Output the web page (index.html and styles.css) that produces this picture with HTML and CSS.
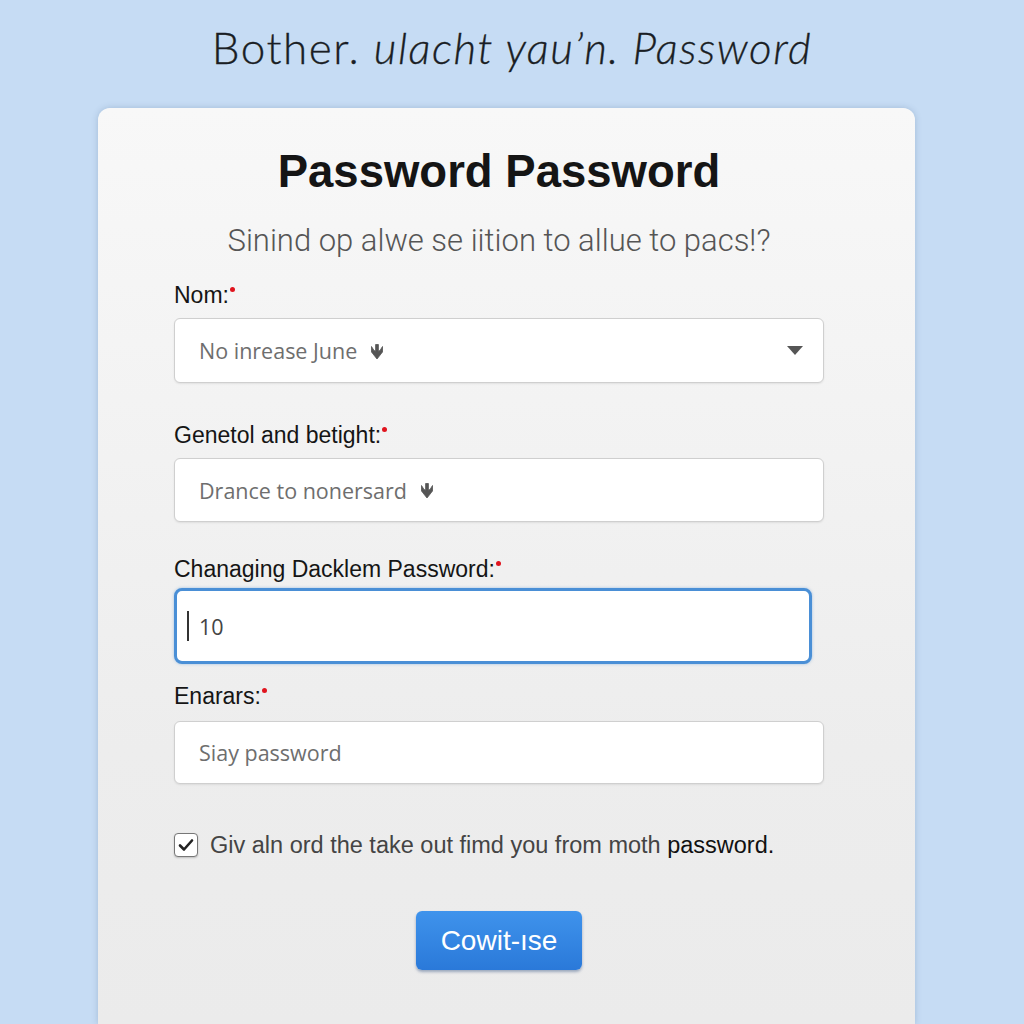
FILE: index.html
```html
<!DOCTYPE html>
<html lang="en">
<head>
    <meta charset="UTF-8">
    <title>Password</title>
    <link rel="stylesheet" href="styles.css">
</head>
<body>
<h1 class="page-title">Bother. <em>ulacht yau’n. Password</em></h1>

<div class="card">
    <h2 class="card-title">Password Password</h2>
    <p class="card-sub">Sinind op alwe se iition to allue to pacs!?</p>

    <form class="form">
        <label class="field-label">Nom:<span class="req"></span></label>
        <div class="input input-select">
            <span class="ph">No inrease June</span>
            <svg class="mark" width="16" height="18" viewBox="0 0 16 18"><path d="M8 17L2.5 10V4.5L5 8.5 6.6 9.2V2.5h2.8v6.7L11 8.5 13.5 4.5V10z" fill="#555" stroke="#555" stroke-width="0.8" stroke-linejoin="round"/></svg>
            <span class="caret"></span>
        </div>

        <label class="field-label l2">Genetol and betight:<span class="req"></span></label>
        <div class="input i2">
            <span class="ph">Drance to nonersard</span>
            <svg class="mark" width="16" height="18" viewBox="0 0 16 18"><path d="M8 17L2.5 10V4.5L5 8.5 6.6 9.2V2.5h2.8v6.7L11 8.5 13.5 4.5V10z" fill="#555" stroke="#555" stroke-width="0.8" stroke-linejoin="round"/></svg>
        </div>

        <label class="field-label l3">Chanaging Dacklem Password:<span class="req"></span></label>
        <div class="input input-focus">
            <span class="cursor"></span>
            <span class="val">10</span>
        </div>

        <label class="field-label l4">Enarars:<span class="req"></span></label>
        <div class="input i4">
            <span class="ph">Siay password</span>
        </div>

        <div class="check-row">
            <span class="checkbox">
                <svg width="16" height="14" viewBox="0 0 16 14"><path d="M2 7.5l4 4L14 2.5" stroke="#222" stroke-width="2.6" fill="none" stroke-linecap="round" stroke-linejoin="round"/></svg>
            </span>
            <span class="check-text">Giv aln ord the take out fimd you from moth <b>password.</b></span>
        </div>

        <div class="actions">
            <button type="button" class="btn">Cowit-ıse</button>
        </div>
    </form>
</div>
</body>
</html>
```

FILE: styles.css
```css
body {
    margin: 0;
    height: 1024px;
    overflow: hidden;
    background-color: #c6dcf4;
    font-family: "Liberation Sans", Arial, sans-serif;
    color: #222;
}

.page-title {
    margin: 0;
    padding-top: 23px;
    height: 108px;
    box-sizing: border-box;
    text-align: center;
    font-family: Lato, "Open Sans", sans-serif;
    font-weight: 300;
    font-size: 44px;
    line-height: 48px;
    letter-spacing: 1.5px;
    color: #1a1e24;
    -webkit-text-stroke: 0.3px #1a1e24;
}
.page-title em {
    font-style: italic;
}

.card {
    width: 817px;
    height: 916px;
    margin-left: 98px;
    box-sizing: border-box;
    padding: 38px 91px 0 76px;
    background: linear-gradient(#f8f8f8, #ededed 70%, #ebebeb);
    border-radius: 12px 12px 0 0;
    box-shadow: 0 0 6px rgba(60, 90, 130, 0.25);
}

.card-title {
    margin: 0;
    text-align: center;
    font-size: 45.5px;
    line-height: 52px;
    font-weight: bold;
    color: #151515;
}

.card-sub {
    margin: 24px 0 22px;
    text-align: center;
    font-family: Roboto, sans-serif;
    font-weight: 300;
    font-size: 31px;
    line-height: 38px;
    color: #555;
}

.field-label {
    display: block;
    font-size: 23px;
    line-height: 26px;
    color: #151515;
    margin-bottom: 10px;
}
.req {
    display: inline-block;
    width: 5px;
    height: 5px;
    border-radius: 50%;
    background: #e0141e;
    vertical-align: top;
    margin-top: 5px;
    margin-left: 1px;
}
.l2 { margin-top: 39px; }
.l3 { margin-top: 34px; margin-bottom: 6px; }
.l4 { margin-top: 19px; margin-bottom: 12px; }

.input {
    display: flex;
    align-items: center;
    height: 65px;
    box-sizing: border-box;
    padding: 0 24px;
    background: #fff;
    border: 1px solid #cfcfcf;
    border-radius: 6px;
    box-shadow: 0 1px 2px rgba(0, 0, 0, 0.08);
    font-family: "Open Sans", sans-serif;
    font-size: 21.5px;
    color: #6e6e6e;
}
.i2 { height: 64px; }
.i4 { height: 63px; }

.mark {
    margin-left: 12px;
}
.caret {
    margin-left: auto;
    margin-right: -4px;
    width: 0;
    height: 0;
    border-left: 8px solid transparent;
    border-right: 8px solid transparent;
    border-top: 9px solid #555;
}

.input-focus {
    width: 638px;
    height: 76px;
    padding-left: 10px;
    border: 3px solid #4a8fd6;
    border-radius: 8px;
    box-shadow: 0 0 3px rgba(74, 143, 214, 0.5);
    color: #444;
}
.cursor {
    width: 2px;
    height: 30px;
    background: #333;
    margin-right: 10px;
}

.check-row {
    display: flex;
    align-items: center;
    gap: 12px;
    margin-top: 49px;
    height: 24px;
}
.checkbox {
    display: flex;
    align-items: center;
    justify-content: center;
    width: 22px;
    height: 22px;
    background: #fff;
    border: 1px solid #777;
    border-radius: 4px;
    box-shadow: 0 1px 2px rgba(0, 0, 0, 0.2);
}
.check-text {
    font-size: 23.5px;
    color: #444;
}
.check-text b {
    font-weight: normal;
    color: #111;
}

.actions {
    margin-top: 54px;
    text-align: center;
}
.btn {
    width: 166px;
    height: 59px;
    border: none;
    border-radius: 6px;
    background: linear-gradient(#3f93ec, #2a79d9);
    box-shadow: 0 2px 3px rgba(0, 40, 100, 0.35);
    color: #fff;
    font-family: "Liberation Sans", Arial, sans-serif;
    font-size: 28px;
}
```
